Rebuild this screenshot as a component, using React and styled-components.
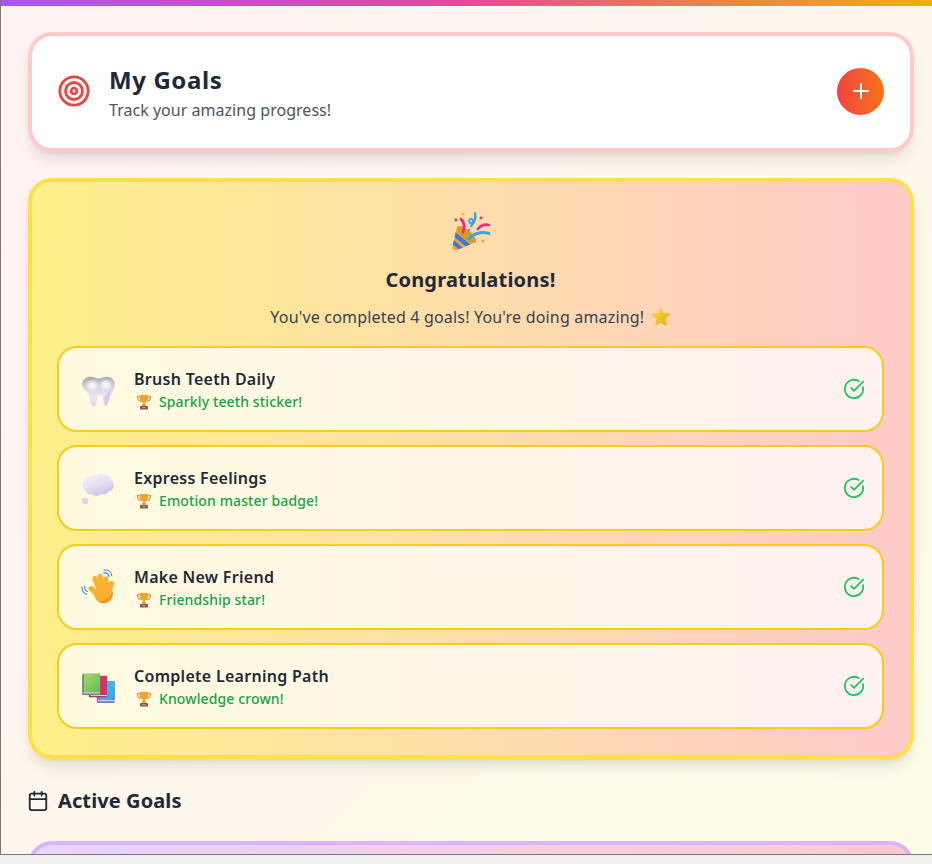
import styled, { createGlobalStyle } from "styled-components";
import { Target, Plus, CircleCheckBig, Calendar } from "lucide-react";

const GlobalStyle = createGlobalStyle`
  html, body {
    margin: 0;
    padding: 0;
    height: 100%;
    overflow: hidden;
    background: #f0f0f0;
  }
  * {
    box-sizing: border-box;
  }
`;

// emoji drawings, viewBox 32
const Tooth = () => (
  <svg width="36" height="36" viewBox="0 0 32 32">
    <defs>
      <linearGradient id="toothFill" x1="0" y1="0" x2="0" y2="1">
        <stop offset="0" stopColor="#a9a8ad" />
        <stop offset="0.35" stopColor="#d4d2d9" />
        <stop offset="0.65" stopColor="#eee6f8" />
        <stop offset="1" stopColor="#e2d3f6" />
      </linearGradient>
      <radialGradient id="toothShine">
        <stop offset="0" stopColor="#fbfbfc" />
        <stop offset="0.5" stopColor="#f0eff2" stopOpacity="0.85" />
        <stop offset="1" stopColor="#e0dfe3" stopOpacity="0" />
      </radialGradient>
    </defs>
    <path
      d="M8 5C11 5 13.5 6.5 15.5 6.5C18 6.5 20 5 23 5C27 5 30 8 30 12C30 16 27.5 19 26.5 22C25.5 25 24.5 30.5 22 31C19.5 31.5 20 25 19 23C18.2 21.5 16 20.5 15 22C14 23.5 14.5 31.5 11.5 31.5C8.5 31.5 8 25 7 21.5C6 18 1 16.5 1 11.5C1 7.5 4 5 8 5Z"
      fill="url(#toothFill)"
    />
    <ellipse cx="10" cy="13" rx="7" ry="6" fill="url(#toothShine)" />
    <ellipse cx="22" cy="12.5" rx="7" ry="6" fill="url(#toothShine)" />
    <path d="M20.5 23c2-2 4-4 6-7.500-.3 4-2 13.500-4.500 15-1 .3-.8-5.500-1.500-7.500z" fill="#d9c5f4" />
  </svg>
);

const Thought = () => (
  <svg width="36" height="36" viewBox="0 0 32 32">
    <defs>
      <linearGradient id="thoughtFill" x1="0.2" y1="0" x2="0.7" y2="1">
        <stop offset="0" stopColor="#f3f1f8" />
        <stop offset="0.55" stopColor="#e3ddf3" />
        <stop offset="1" stopColor="#c9beea" />
      </linearGradient>
    </defs>
    <path
      d="M14 4c2-1 5-1 7 .5 3-.5 5.500 1.500 5.500 4 2 1 3 3.500 2.500 5.500 0 3-2 5-4.500 5-1.500 2.500-4.500 3-6.500 2-2.500 2.500-6 2.500-8 .500-3.500.500-6-1-6.500-3.500C1.500 16 .500 13 2.500 10.500 3 7.500 6 5.500 8.500 6 10 4.500 12 3.700 14 4z"
      fill="url(#thoughtFill)"
    />
    <circle cx="3.800" cy="27.500" r="2.800" fill="#d9d2ef" />
  </svg>
);

const Wave = () => (
  <svg width="36" height="36" viewBox="0 0 32 32">
    <g fill="none" stroke="#2f8fd8" strokeWidth="1" strokeLinecap="round">
      <path d="M20 3.500c2.400-.4 4.400 1 4.900 3.300" />
      <path d="M20.500 1c3.400-.4 6.200 1.600 6.900 4.800" />
      <path d="M3.300 15.500c-.4 1.900.6 3.700 2.400 4.500" />
      <path d="M1 16c-.4 3 1.200 5.500 4.200 6.500" />
    </g>
    <g fill="none" stroke="#fbb02f" strokeWidth="4.600" strokeLinecap="round">
      <path d="M16 24L9 17.500" />
      <path d="M16.500 20L12.500 8.500" />
      <path d="M20 18L17 6.500" />
      <path d="M23 18L22.200 9" />
      <path d="M25.200 20L27 13" />
    </g>
    <circle cx="20" cy="22" r="8.500" fill="#fbb02f" />
    <path d="M28.200 20c.8 5.500-3 10.500-8.200 10.500-2 0-3.800-.7-5-1.800 5 .3 10.500-2.700 13.200-8.700z" fill="#f3961f" />
  </svg>
);

const Books = () => (
  <svg width="36" height="36" viewBox="0 0 32 32">
    <defs>
      <linearGradient id="bookGreen" x1="0" y1="0" x2="1" y2="1">
        <stop offset="0" stopColor="#a4d66a" />
        <stop offset="1" stopColor="#66bb5a" />
      </linearGradient>
      <linearGradient id="bookBlue" x1="0" y1="0" x2="1" y2="1">
        <stop offset="0" stopColor="#47c6f5" />
        <stop offset="1" stopColor="#3b9ee8" />
      </linearGradient>
    </defs>
    <rect x="14" y="11.500" width="16" height="19.500" rx="1" fill="#6f7fc4" />
    <rect x="17" y="11.500" width="13" height="17" fill="url(#bookBlue)" />
    <rect x="15" y="28.500" width="15" height="1" fill="#cfd3ea" />
    <rect x="7" y="7" width="16" height="19" rx="1" fill="#8c2f63" />
    <rect x="10" y="7" width="13" height="17" fill="#e32b66" />
    <rect x="8.500" y="24" width="14.500" height="1" fill="#ecc4d4" />
    <rect x="1" y="5" width="16" height="19" rx="1" fill="#6b8f70" />
    <rect x="2.500" y="5" width="14.500" height="16.500" fill="url(#bookGreen)" />
    <rect x="2" y="21.500" width="15" height="1.200" fill="#c9ccd6" />
  </svg>
);

const Popper = () => (
  <svg width="40" height="40" viewBox="0 0 40 40">
    <defs>
      <clipPath id="coneClip">
        <path d="M6 17L25 32L6 40C3 41 .5 39 1.500 36Z" />
      </clipPath>
    </defs>
    <path d="M6 17L25 32L6 40C3 41 .5 39 1.500 36Z" fill="#eba93a" />
    <g clipPath="url(#coneClip)" stroke="#3f76e0" fill="none">
      <path d="M-1 20.500L20 38" strokeWidth="4.500" />
      <path d="M-5 26L15 43" strokeWidth="4" />
    </g>
    <ellipse cx="15.500" cy="24.500" rx="12" ry="4.500" transform="rotate(40 15.500 24.500)" fill="#d99a26" />
    <g fill="none" strokeLinecap="round">
      <path d="M10 9C13 12 14 17 12 22" stroke="#f0288c" strokeWidth="2.800" />
      <path d="M27 19C30 15 34 14 38 15" stroke="#f0288c" strokeWidth="2.600" />
      <path d="M18 29C21 24 30 21 38 23.500" stroke="#35a5e8" strokeWidth="3" />
      <path d="M24 3.500C25 8 23 13 20 16" stroke="#35a5e8" strokeWidth="2.400" />
      <circle cx="20" cy="11" r="2" stroke="#35a5e8" strokeWidth="1.800" />
    </g>
    <circle cx="12" cy="4" r="1.500" fill="#f2b632" />
    <circle cx="5" cy="10" r="1.400" fill="#f0288c" />
    <circle cx="30" cy="8" r="1.400" fill="#f0288c" />
    <circle cx="18" cy="20" r="1.300" fill="#35a5e8" />
    <circle cx="32" cy="31" r="1.500" fill="#f0a832" />
  </svg>
);

const Trophy = () => (
  <svg width="16" height="16" viewBox="0 0 16 16">
    <path d="M3.500 2.500H1.500c0 3 1 4.500 3.500 5M12.500 2.500h2c0 3-1 4.500-3.500 5" fill="none" stroke="#e8932a" strokeWidth="1.200" />
    <path d="M3.500 1h9c0 4-1 7-3.500 7.500V11H7V8.500C4.500 8 3.500 5 3.500 1z" fill="#f5a328" />
    <rect x="6" y="10" width="4" height="2" fill="#e8a13a" />
    <rect x="4" y="12" width="8" height="3.500" rx="0.500" fill="#8a5560" />
    <rect x="6.500" y="13" width="3" height="1.200" fill="#e8a13a" />
  </svg>
);

const Star = () => (
  <svg width="20" height="20" viewBox="0 0 20 20">
    <defs>
      <linearGradient id="starFill" x1="0" y1="0" x2="1" y2="1">
        <stop offset="0" stopColor="#ffd83d" />
        <stop offset="1" stopColor="#e0ac1a" />
      </linearGradient>
    </defs>
    <path
      d="M10 1.500l2.500 5.400 5.900.7c.8.100 1 1 .5 1.500l-4.300 4 1.100 5.700c.1.700-.6 1.200-1.300.8L10 16.800l-4.400 2.800c-.7.400-1.400-.1-1.300-.8l1.100-5.700-4.300-4c-.5-.5-.3-1.400.5-1.500l5.900-.7z"
      fill="url(#starFill)"
    />
  </svg>
);

const completed = [
  { title: "Brush Teeth Daily", reward: "Sparkly teeth sticker!", Icon: Tooth },
  { title: "Express Feelings", reward: "Emotion master badge!", Icon: Thought },
  { title: "Make New Friend", reward: "Friendship star!", Icon: Wave },
  { title: "Complete Learning Path", reward: "Knowledge crown!", Icon: Books },
];

const App = () => {
  return (
    <Frame>
      <GlobalStyle />
      <TopBar />
      <Content>
        <HeaderCard>
          <HeaderLeft>
            <HeaderIcon>
              <Target size={34} color="#ef4444" strokeWidth={2} />
            </HeaderIcon>
            <HeaderText>
              <PageTitle>My Goals</PageTitle>
              <PageSub>Track your amazing progress!</PageSub>
            </HeaderText>
          </HeaderLeft>
          <AddButton>
            <Plus size={24} color="#fff" strokeWidth={2} />
          </AddButton>
        </HeaderCard>

        <CongratsCard>
          <PopperWrap>
            <Popper />
          </PopperWrap>
          <CongratsTitle>Congratulations!</CongratsTitle>
          <CongratsText>
            You've completed 4 goals! You're doing amazing! <Star />
          </CongratsText>
          <GoalList>
            {completed.map(({ title, reward, Icon }) => (
              <GoalRow key={title}>
                <GoalLeft>
                  <EmojiBox>
                    <Icon />
                  </EmojiBox>
                  <GoalText>
                    <GoalTitle>{title}</GoalTitle>
                    <GoalReward>
                      <Trophy />
                      {reward}
                    </GoalReward>
                  </GoalText>
                </GoalLeft>
                <CircleCheckBig size={22} color="#22c55e" strokeWidth={2} />
              </GoalRow>
            ))}
          </GoalList>
        </CongratsCard>

        <SectionHead>
          <Calendar size={22} color="#1f2937" strokeWidth={2} />
          <SectionTitle>Active Goals</SectionTitle>
        </SectionHead>

        <ActiveCard />
      </Content>
    </Frame>
  );
};

const Frame = styled.div`
  height: 855px;
  overflow: hidden;
  border-left: 1px solid #777;
  border-bottom: 1px solid #777;
  background: linear-gradient(135deg, #fef2f2, #fefce8);
  font-family: "Noto Sans", "Open Sans", sans-serif;
  color: #1f2937;
`;
const TopBar = styled.div`
  height: 6px;
  background: linear-gradient(90deg, #a855f7, #ec4899, #eab308);
`;
const Content = styled.div`
  padding: 26px 18px 0 27px;
`;
const HeaderCard = styled.div`
  height: 120px;
  display: flex;
  align-items: center;
  justify-content: space-between;
  padding: 0 26px 0 25px;
  background: #fff;
  border: 4px solid #fecaca;
  border-radius: 24px;
  box-shadow: 0 10px 15px -3px rgba(0, 0, 0, 0.1), 0 4px 6px -4px rgba(0, 0, 0, 0.1);
`;
const HeaderLeft = styled.div`
  display: flex;
  align-items: center;
  gap: 18px;
`;
const HeaderIcon = styled.div`
  display: flex;
  margin-bottom: 2px;
`;
const HeaderText = styled.div`
  padding-top: 2px;
`;
const PageTitle = styled.div`
  font-size: 24px;
  line-height: 32px;
  font-weight: 700;
  letter-spacing: 0.6px;
`;
const PageSub = styled.div`
  margin-top: 2px;
  font-size: 16px;
  line-height: 24px;
  color: #4b5563;
  letter-spacing: 0.03px;
`;
const AddButton = styled.div`
  width: 47px;
  height: 47px;
  margin-bottom: 2px;
  display: flex;
  align-items: center;
  justify-content: center;
  border-radius: 50%;
  background: linear-gradient(90deg, #ef4444, #f97316);
`;
const CongratsCard = styled.div`
  margin-top: 26px;
  height: 581px;
  padding: 28px 26px 0 25px;
  background: linear-gradient(90deg, #fef08a, #fecaca);
  border: 4px solid #fde047;
  border-radius: 24px;
  box-shadow: 0 10px 15px -3px rgba(0, 0, 0, 0.1), 0 4px 6px -4px rgba(0, 0, 0, 0.1);
`;
const PopperWrap = styled.div`
  height: 40px;
  display: flex;
  justify-content: center;
`;
const CongratsTitle = styled.div`
  margin-top: 16px;
  font-size: 20px;
  line-height: 28px;
  font-weight: 700;
  text-align: center;
  letter-spacing: 0.2px;
`;
const CongratsText = styled.div`
  margin-top: 11px;
  height: 24px;
  font-size: 16px;
  line-height: 24px;
  color: #374151;
  text-align: center;
  letter-spacing: 0.18px;
  svg {
    margin-left: 2px;
    vertical-align: -3px;
  }
`;
const GoalList = styled.div`
  margin-top: 17px;
  display: flex;
  flex-direction: column;
  gap: 13px;
`;
const GoalRow = styled.div`
  height: 86px;
  display: flex;
  align-items: center;
  justify-content: space-between;
  padding: 0 17px 0 22px;
  background: rgba(255, 255, 255, 0.72);
  border: 2px solid #facc15;
  border-radius: 20px;
`;
const GoalLeft = styled.div`
  display: flex;
  align-items: center;
  gap: 17px;
`;
const EmojiBox = styled.div`
  width: 36px;
  height: 36px;
`;
const GoalText = styled.div`
  padding-top: 1px;
`;
const GoalTitle = styled.div`
  font-size: 16px;
  line-height: 24px;
  font-weight: 600;
  letter-spacing: 0.28px;
`;
const GoalReward = styled.div`
  margin-top: 1px;
  display: flex;
  align-items: center;
  gap: 7px;
  font-size: 14px;
  line-height: 20px;
  font-weight: 500;
  color: #16a34a;
  letter-spacing: 0.12px;
  svg {
    margin-left: 2px;
  }
`;
const SectionHead = styled.div`
  margin-top: 28px;
  margin-left: -1px;
  display: flex;
  align-items: center;
  gap: 9px;
`;
const SectionTitle = styled.div`
  font-size: 20px;
  line-height: 28px;
  font-weight: 700;
  letter-spacing: 0.1px;
`;
const ActiveCard = styled.div`
  margin-top: 26px;
  height: 200px;
  background: linear-gradient(90deg, #e9d5ff, #fecaca);
  border: 4px solid #d8b4fe;
  border-radius: 24px;
`;

export default App;
